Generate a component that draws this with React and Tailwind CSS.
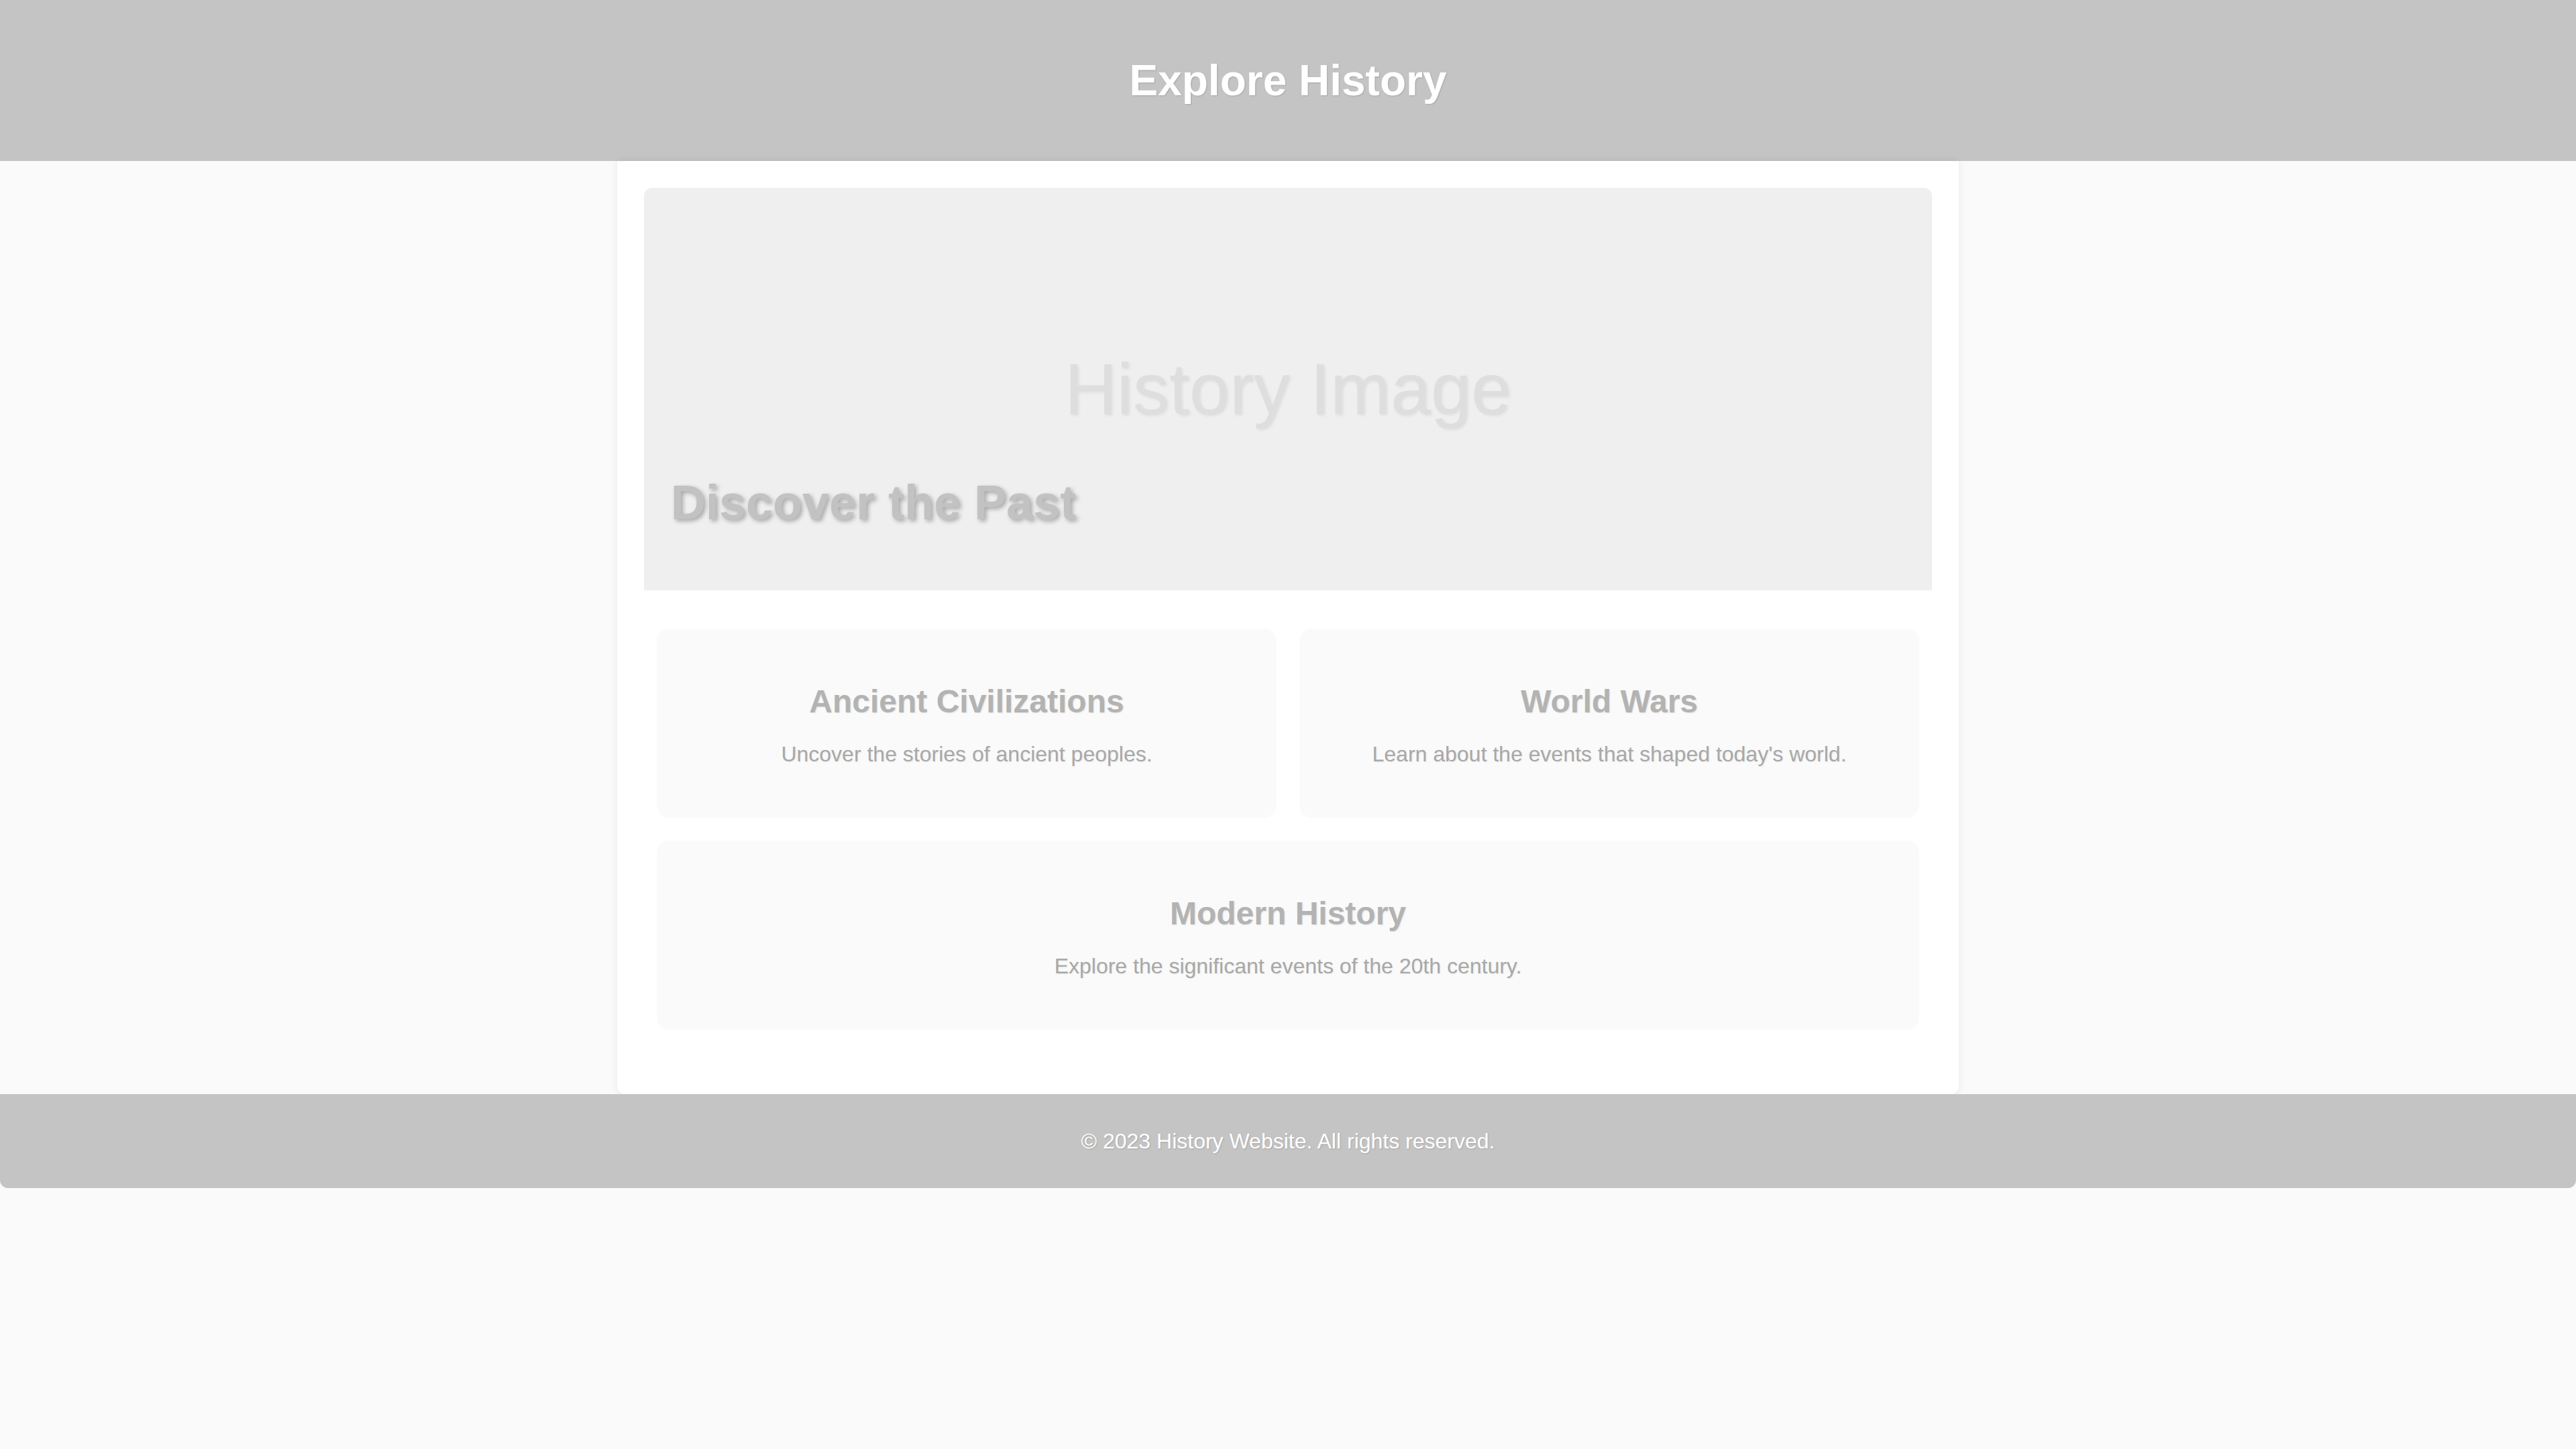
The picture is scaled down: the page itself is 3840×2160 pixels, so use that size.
export default function App() {
  const cards = [
    { title: "Ancient Civilizations", desc: "Uncover the stories of ancient peoples." },
    { title: "World Wars", desc: "Learn about the events that shaped today's world." },
  ];
  return (
    <div className="min-h-[2160px] w-full bg-[#fafafa] font-['Liberation_Sans',Arial,sans-serif]">
      <header className="flex h-[240px] items-center justify-center bg-[#c4c4c4]">
        <h1 className="text-[64px] font-bold leading-[74px] text-white [text-shadow:1px_1px_2px_rgba(0,0,0,0.15)]">
          Explore History
        </h1>
      </header>
      <main className="mx-auto w-[2000px] rounded-b-[12px] bg-white px-[40px] pt-[40px] pb-[97px] shadow-[0_0_12px_rgba(0,0,0,0.08)]">
        <section className="relative flex h-[600px] items-center justify-center rounded-t-[12px] bg-[#efefef]">
          <span className="text-[108px] leading-[124px] text-[#dedede] [text-shadow:2px_2px_4px_rgba(0,0,0,0.08)]">
            History Image
          </span>
          <h2 className="absolute bottom-[89px] left-[40px] text-[72px] font-bold leading-[83px] text-[#c2c2c2] [text-shadow:3px_3px_6px_rgba(0,0,0,0.3)]">
            Discover the Past
          </h2>
        </section>
        <div className="mt-[58px] grid grid-cols-2 gap-[36px] px-[20px]">
          {cards.map((c) => (
            <div
              key={c.title}
              className="flex h-[280px] flex-col items-center rounded-[16px] bg-[#fafafa] pt-[80px] shadow-[0_0_6px_rgba(0,0,0,0.02)]"
            >
              <h3 className="text-[48px] font-bold leading-[56px] text-[#b3b3b3] [text-shadow:1px_1px_2px_rgba(0,0,0,0.1)]">
                {c.title}
              </h3>
              <p className="mt-[32px] text-[32px] leading-[36px] text-[#a8a8a8] [text-shadow:1px_1px_2px_rgba(0,0,0,0.08)]">
                {c.desc}
              </p>
            </div>
          ))}
          <div className="col-span-2 flex h-[280px] flex-col items-center rounded-[16px] bg-[#fafafa] pt-[80px] shadow-[0_0_6px_rgba(0,0,0,0.02)]">
            <h3 className="text-[48px] font-bold leading-[56px] text-[#b3b3b3] [text-shadow:1px_1px_2px_rgba(0,0,0,0.1)]">
              Modern History
            </h3>
            <p className="mt-[32px] text-[32px] leading-[36px] text-[#a8a8a8] [text-shadow:1px_1px_2px_rgba(0,0,0,0.08)]">
              Explore the significant events of the 20th century.
            </p>
          </div>
        </div>
      </main>
      <footer className="flex h-[140px] items-center justify-center rounded-b-[12px] bg-[#c4c4c4]">
        <p className="text-[32px] leading-[36px] text-white [text-shadow:1px_1px_2px_rgba(0,0,0,0.15)]">
          © 2023 History Website. All rights reserved.
        </p>
      </footer>
    </div>
  );
}
